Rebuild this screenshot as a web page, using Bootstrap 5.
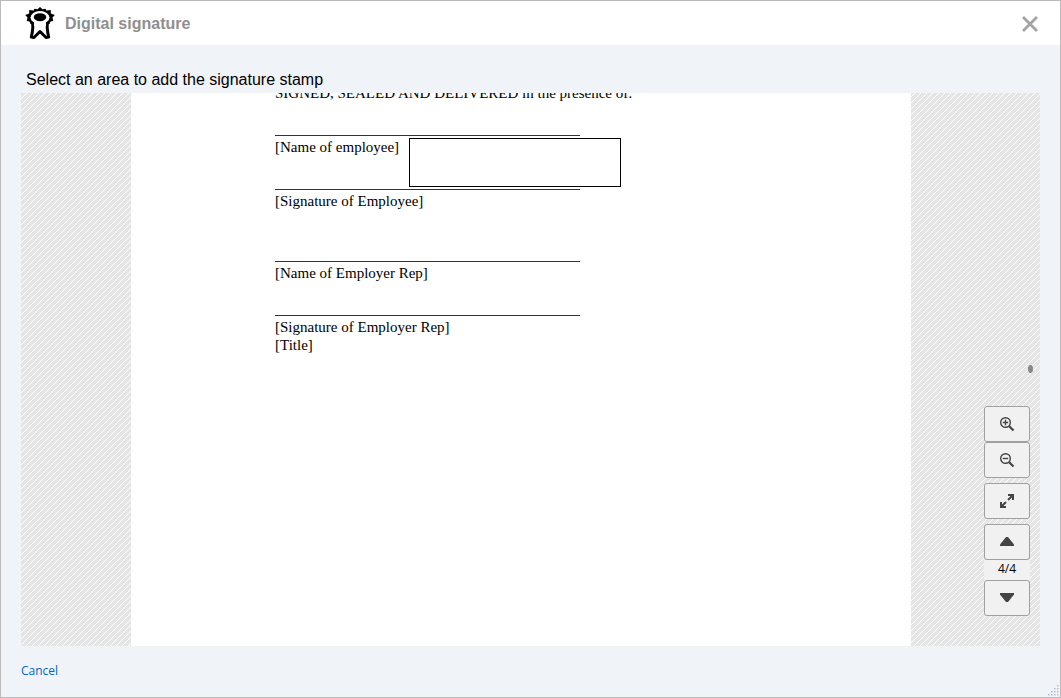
<!DOCTYPE html>
<html lang="en">
<head>
<meta charset="utf-8">
<meta name="viewport" content="width=device-width, initial-scale=1">
<title>Digital signature</title>
<link href="https://cdn.jsdelivr.net/npm/bootstrap@5.3.0/dist/css/bootstrap.min.css" rel="stylesheet">
<style>
  body { font-family: "Liberation Sans", Arial, sans-serif; color: #000; }
  .dialog-window { background: #f0f3f8; border: 1px solid #bababa; }
  .dialog-bar { height: 44px; padding: 2px 20px 0 24px; background: #fff; }
  .dialog-title { font-size: 16px; line-height: 20px; color: #8f8f8f; }
  .close-btn { color: #a3a3a3; }
  .prompt { font-size: 16px; line-height: 20px; padding: 25px 25px 3px; }
  .viewer { margin: 0 20px; min-height: 0; padding-right: 19px; background-color: #e5e5e5;
    background-image: url("data:image/svg+xml,%3Csvg xmlns='http://www.w3.org/2000/svg' width='6' height='6' shape-rendering='crispEdges'%3E%3Cpath fill='%23fff' d='M5 0h1v1h-1zM4 1h1v1h-1zM3 2h1v1h-1zM2 3h1v1h-1zM1 4h1v1h-1zM0 5h1v1h-1z'/%3E%3C/svg%3E"); }
  .doc-page { width: 780px; height: 100%; background: #fff; padding: 0 144px; font: 15px/18px "Liberation Serif", "Times New Roman", serif; }
  .doc-text { margin-top: -9px; }
  .doc-text p { margin: 0; min-height: 18px; white-space: nowrap; }
  .doc-text .gap-line { margin-top: 18px; }
  .doc-text .gap-wide { margin-top: 36px; }
  .rule-line { width: 305px; height: 16px; margin-bottom: 2px; border-bottom: 1px solid #333; }
  .stamp-area { left: 278px; top: 45px; width: 212px; height: 49px; border: 1px solid #000; background: #fff; }
  .tools { right: 10px; bottom: 30px; width: 46px; }
  .tool-btn { height: 36px; border: 1px solid #a0a0a0; border-radius: 3px; background: #f1f1f1; color: #444; }
  .tool-gap { margin-top: 5px; }
  .page-count { height: 20px; background: #f1f1f1; font: 12px/18px "Open Sans", sans-serif; }
  .scroll-mark { right: 7px; top: 272px; width: 5px; height: 8px; border-radius: 50%; background: #888; }
  .dialog-foot { padding: 16px 20px 17px; font: 12px/18px "Open Sans", sans-serif; }
  .dialog-foot a { color: #0067c5; }
  .grip { right: 1px; bottom: 1px; }
</style>
</head>
<body>
<main class="dialog-window position-relative vh-100 d-flex flex-column">
  <header class="dialog-bar d-flex align-items-center">
    <svg width="32" height="34" viewBox="0 1 32 34" aria-hidden="true">
      <path d="M15 1L17.500 3.200 20.500 2.800 21.500 4.500 25.800 4 25.800 7.500 29.800 9 27.500 11.500 28.300 15 25.500 15.500 24.500 18H5.500L4.500 15.500 1.700 15 2.500 11.500 .2 9 4.200 7.500 4.200 4 8.500 4.500 9.500 2.800 12.500 3.200z" fill="#000"/>
      <path d="M7.500 16.500Q8.500 22 6.300 31L9 31.500 15 25.500 21 31.500 23.700 31Q21.500 22 22.500 16.500z" fill="#fff" stroke="#000" stroke-width="3" stroke-linejoin="round"/>
      <ellipse cx="15" cy="11.500" rx="9.500" ry="6.500" fill="#fff"/>
      <path d="M9 15h12v5H9z" fill="#fff"/>
      <ellipse cx="15" cy="11.200" rx="6.200" ry="4" fill="#000"/>
    </svg>
    <h1 class="dialog-title fw-bold mb-0 ms-2">Digital signature</h1>
    <button type="button" class="close-btn btn p-0 border-0 ms-auto d-flex" aria-label="Close">
      <svg width="20" height="20" viewBox="0 0 20 20"><path d="M4 4L16 16M16 4L4 16" stroke="currentColor" stroke-width="2.800" stroke-linecap="square"/></svg>
    </button>
  </header>
  <p class="prompt mb-0">Select an area to add the signature stamp</p>
  <section class="viewer position-relative flex-grow-1" aria-label="Document preview">
    <div class="doc-page position-relative overflow-hidden mx-auto">
      <div class="doc-text">
        <p>SIGNED, SEALED AND DELIVERED in the presence of:</p>
        <div class="rule-line gap-line"></div>
        <p>[Name of employee]</p>
        <div class="rule-line gap-line"></div>
        <p>[Signature of Employee]</p>
        <div class="rule-line gap-wide"></div>
        <p>[Name of Employer Rep]</p>
        <div class="rule-line gap-line"></div>
        <p>[Signature of Employer Rep]</p>
        <p>[Title]</p>
      </div>
      <div class="stamp-area position-absolute"></div>
    </div>
    <div class="scroll-mark position-absolute"></div>
    <div class="tools position-absolute d-flex flex-column">
      <button type="button" class="tool-btn btn p-0 d-flex align-items-center justify-content-center" aria-label="Zoom in">
        <svg width="16" height="16" viewBox="0 0 16 16" fill="none" stroke="currentColor"><circle cx="6.500" cy="6.500" r="4.800" stroke-width="1.400"/><path d="M3.800 6.500h5.400M6.500 3.800v5.400" stroke-width="1.400"/><path d="M10 10l4.500 4.500" stroke-width="2.200"/></svg>
      </button>
      <button type="button" class="tool-btn btn p-0 d-flex align-items-center justify-content-center" aria-label="Zoom out">
        <svg width="16" height="16" viewBox="0 0 16 16" fill="none" stroke="currentColor"><circle cx="6.500" cy="6.500" r="4.800" stroke-width="1.400"/><path d="M3.800 6.500h5.400" stroke-width="1.400"/><path d="M10 10l4.500 4.500" stroke-width="2.200"/></svg>
      </button>
      <button type="button" class="tool-btn tool-gap btn p-0 d-flex align-items-center justify-content-center" aria-label="Fit to window">
        <svg width="16" height="16" viewBox="0 0 16 16" fill="none" stroke="currentColor" stroke-width="2"><path d="M9 2h5v5M14 2L9 7M7 14H2V9M2 14l5-5"/></svg>
      </button>
      <button type="button" class="tool-btn tool-gap btn p-0 d-flex align-items-center justify-content-center" aria-label="Previous page">
        <svg width="16" height="16" viewBox="0 0 16 16" fill="currentColor"><path d="M1 12v-1.500L7 3h2l6 7.500V12z"/></svg>
      </button>
      <div class="page-count text-center">4/4</div>
      <button type="button" class="tool-btn btn p-0 d-flex align-items-center justify-content-center" aria-label="Next page">
        <svg width="16" height="16" viewBox="0 0 16 16" fill="currentColor"><path d="M1 3v1.500L7 12h2l6-7.500V3z"/></svg>
      </button>
    </div>
  </section>
  <footer class="dialog-foot"><a href="#" class="text-decoration-none">Cancel</a></footer>
  <svg class="grip position-absolute" width="11" height="11" viewBox="0 0 11 11" fill="#b4bccb" aria-hidden="true">
    <path d="M9 0h1.500v1.500H9zM9 3h1.500v1.500H9zM6 3h1.500v1.500H6zM9 6h1.500v1.500H9zM6 6h1.500v1.500H6zM3 6h1.500v1.500H3zM9 9h1.500v1.500H9zM6 9h1.500v1.500H6zM3 9h1.500v1.500H3zM0 9h1.500v1.500H0z"/>
  </svg>
</main>
<script src="https://cdn.jsdelivr.net/npm/bootstrap@5.3.0/dist/js/bootstrap.bundle.min.js"></script>
</body>
</html>
